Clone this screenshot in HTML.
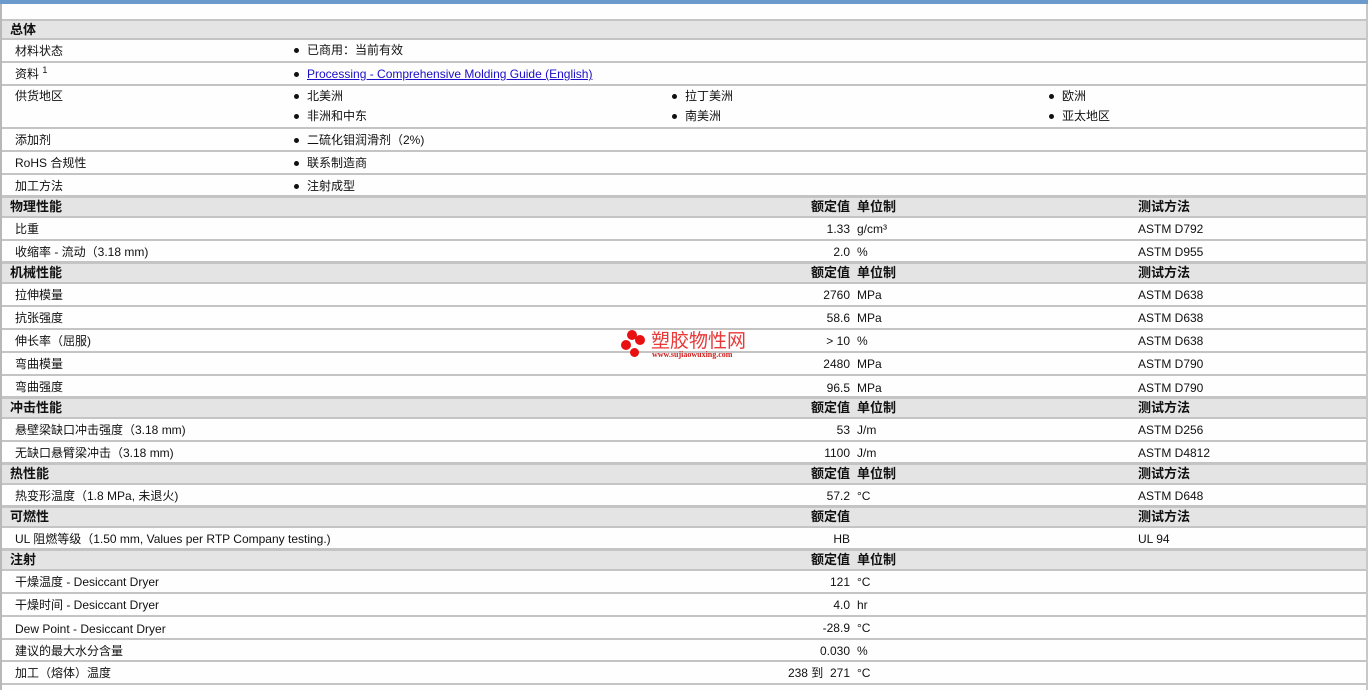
<!DOCTYPE html>
<html><head><meta charset="utf-8">
<style>
*{margin:0;padding:0;box-sizing:border-box}
body{width:1368px;height:690px;background:#fdfefd;position:relative;overflow:hidden;font-family:"Liberation Sans","Noto Sans CJK SC",sans-serif;font-size:12px;line-height:14px;color:#111}
#top{position:absolute;left:0;top:0;width:1368px;height:4px;background:#6b9bcd}
#lb{position:absolute;left:0;top:4px;width:2px;height:686px;background:#b8b8b8}
#rb{position:absolute;right:0;top:4px;width:2px;height:686px;background:#c8c8c8}
.r{position:absolute;left:2px;width:1364px;border-bottom:2px solid #c4c4c4}
.h{background:#e4e4e4;border-top:2px solid #c4c4c4;border-bottom:2px solid #c4c4c4;font-weight:bold;font-size:13px}
.r span{line-height:14px;height:14px}
.t{position:absolute;top:4px;white-space:nowrap}
.h span{top:1px !important;line-height:16px !important;height:16px !important}
.v{position:absolute;top:4px;right:516px;text-align:right;white-space:nowrap}
.u{position:absolute;top:4px;left:855px;white-space:nowrap}
.m{position:absolute;top:4px;left:1136px;white-space:nowrap}
.b{position:absolute;white-space:nowrap}
.b:before{content:"";position:absolute;left:-13px;top:5px;width:5px;height:5px;border-radius:50%;background:#111}
a{color:#1a0dcc;text-decoration:underline}
sup{font-size:9px;line-height:0;vertical-align:5px}
</style></head><body>
<div id="top"></div><div id="lb"></div><div id="rb"></div>

<div class="r h" style="top:19px;height:21px"><span class="t" style="left:8px">总体</span></div>
<div class="r" style="top:40px;height:23px"><span class="t" style="left:13px">材料状态</span><span class="b" style="left:305px;top:3px">已商用：当前有效</span></div>
<div class="r" style="top:63px;height:23px"><span class="t" style="left:13px">资料 <sup>1</sup></span><span class="b" style="left:305px;top:4px"><a>Processing - Comprehensive Molding Guide (English)</a></span></div>
<div class="r" style="top:86px;height:43px"><span class="t" style="left:13px;top:3px">供货地区</span>
<span class="b" style="left:305px;top:3px">北美洲</span><span class="b" style="left:683px;top:3px">拉丁美洲</span><span class="b" style="left:1060px;top:3px">欧洲</span>
<span class="b" style="left:305px;top:23px">非洲和中东</span><span class="b" style="left:683px;top:23px">南美洲</span><span class="b" style="left:1060px;top:23px">亚太地区</span></div>
<div class="r" style="top:129px;height:23px"><span class="t" style="left:13px">添加剂</span><span class="b" style="left:305px;top:4px">二硫化钼润滑剂（2%)</span></div>
<div class="r" style="top:152px;height:23px"><span class="t" style="left:13px">RoHS 合规性</span><span class="b" style="left:305px;top:4px">联系制造商</span></div>
<div class="r" style="top:175px;height:22px"><span class="t" style="left:13px">加工方法</span><span class="b" style="left:305px;top:4px">注射成型</span></div>

<div class="r h" style="top:196px;height:22px"><span class="t" style="left:8px">物理性能</span><span class="v">额定值</span><span class="u">单位制</span><span class="m">测试方法</span></div>
<div class="r" style="top:218px;height:23px"><span class="t" style="left:13px">比重</span><span class="v">1.33</span><span class="u">g/cm³</span><span class="m">ASTM D792</span></div>
<div class="r" style="top:241px;height:22px"><span class="t" style="left:13px">收缩率 - 流动（3.18 mm)</span><span class="v">2.0</span><span class="u">%</span><span class="m">ASTM D955</span></div>

<div class="r h" style="top:262px;height:22px"><span class="t" style="left:8px">机械性能</span><span class="v">额定值</span><span class="u">单位制</span><span class="m">测试方法</span></div>
<div class="r" style="top:284px;height:23px"><span class="t" style="left:13px">拉伸模量</span><span class="v">2760</span><span class="u">MPa</span><span class="m">ASTM D638</span></div>
<div class="r" style="top:307px;height:23px"><span class="t" style="left:13px">抗张强度</span><span class="v">58.6</span><span class="u">MPa</span><span class="m">ASTM D638</span></div>
<div class="r" style="top:330px;height:23px"><span class="t" style="left:13px">伸长率（屈服)</span><span class="v">&gt; 10</span><span class="u">%</span><span class="m">ASTM D638</span></div>
<div class="r" style="top:353px;height:23px"><span class="t" style="left:13px">弯曲模量</span><span class="v">2480</span><span class="u">MPa</span><span class="m">ASTM D790</span></div>
<div class="r" style="top:376px;height:22px"><span class="t" style="left:13px">弯曲强度</span><span class="v" style="top:5px">96.5</span><span class="u" style="top:5px">MPa</span><span class="m" style="top:5px">ASTM D790</span></div>

<div class="r h" style="top:397px;height:22px"><span class="t" style="left:8px">冲击性能</span><span class="v">额定值</span><span class="u">单位制</span><span class="m">测试方法</span></div>
<div class="r" style="top:419px;height:23px"><span class="t" style="left:13px">悬壁梁缺口冲击强度（3.18 mm)</span><span class="v">53</span><span class="u">J/m</span><span class="m">ASTM D256</span></div>
<div class="r" style="top:442px;height:22px"><span class="t" style="left:13px">无缺口悬臂梁冲击（3.18 mm)</span><span class="v">1100</span><span class="u">J/m</span><span class="m">ASTM D4812</span></div>

<div class="r h" style="top:463px;height:22px"><span class="t" style="left:8px">热性能</span><span class="v">额定值</span><span class="u">单位制</span><span class="m">测试方法</span></div>
<div class="r" style="top:485px;height:22px"><span class="t" style="left:13px">热变形温度（1.8 MPa, 未退火)</span><span class="v">57.2</span><span class="u">°C</span><span class="m">ASTM D648</span></div>

<div class="r h" style="top:506px;height:22px"><span class="t" style="left:8px">可燃性</span><span class="v">额定值</span><span class="m">测试方法</span></div>
<div class="r" style="top:528px;height:22px"><span class="t" style="left:13px">UL 阻燃等级（1.50 mm, Values per RTP Company testing.)</span><span class="v">HB</span><span class="m">UL 94</span></div>

<div class="r h" style="top:549px;height:22px"><span class="t" style="left:8px">注射</span><span class="v">额定值</span><span class="u">单位制</span></div>
<div class="r" style="top:571px;height:23px"><span class="t" style="left:13px">干燥温度 - Desiccant Dryer</span><span class="v">121</span><span class="u">°C</span></div>
<div class="r" style="top:594px;height:23px"><span class="t" style="left:13px">干燥时间 - Desiccant Dryer</span><span class="v">4.0</span><span class="u">hr</span></div>
<div class="r" style="top:617px;height:23px"><span class="t" style="left:13px;top:5px">Dew Point - Desiccant Dryer</span><span class="v">-28.9</span><span class="u">°C</span></div>
<div class="r" style="top:640px;height:22px"><span class="t" style="left:13px">建议的最大水分含量</span><span class="v">0.030</span><span class="u">%</span></div>
<div class="r" style="top:662px;height:23px"><span class="t" style="left:13px">加工（熔体）温度</span><span class="v">238 到&nbsp; 271</span><span class="u">°C</span></div>

<!-- watermark -->
<div style="position:absolute;left:0;top:0">
<div style="position:absolute;left:627px;top:330px;width:10px;height:10px;border-radius:50%;background:#e81010"></div>
<div style="position:absolute;left:635px;top:335px;width:10px;height:10px;border-radius:50%;background:#e81010"></div>
<div style="position:absolute;left:621px;top:340px;width:10px;height:10px;border-radius:50%;background:#e81010"></div>
<div style="position:absolute;left:630px;top:348px;width:9px;height:9px;border-radius:50%;background:#e81010"></div>
<div style="position:absolute;left:651px;top:329px;font-size:19px;color:#e83838;font-family:'Noto Sans CJK SC',sans-serif;line-height:22px;white-space:nowrap">塑胶物性网</div>
<div style="position:absolute;left:652px;top:350px;font-size:8px;line-height:9px;color:#d02020;font-family:'Liberation Serif',serif;font-weight:bold;white-space:nowrap">www.sujiaowuxing.com</div>
</div>
</body></html>
